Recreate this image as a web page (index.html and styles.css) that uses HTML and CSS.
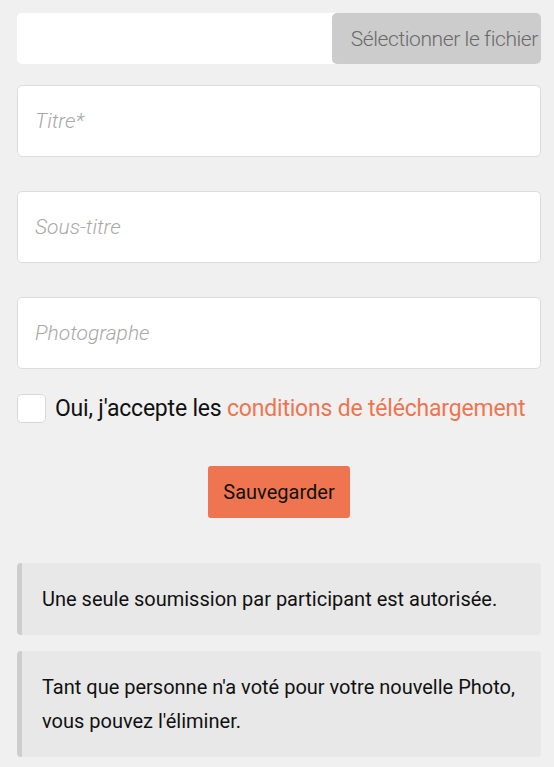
FILE: index.html
```html
<!DOCTYPE html>
<html lang="fr">
<head>
<meta charset="utf-8">
<link rel="stylesheet" href="styles.css">
</head>
<body>
<form class="form">
  <div class="file">
    <span class="file-name"></span>
    <span class="file-btn">Sélectionner le fichier</span>
  </div>
  <input class="field" type="text" placeholder="Titre*">
  <input class="field" type="text" placeholder="Sous-titre">
  <input class="field" type="text" placeholder="Photographe">
  <label class="check">
    <span class="box"></span>
    <span class="check-text">Oui, j'accepte les <a class="link">conditions de téléchargement</a></span>
  </label>
  <div class="actions"><button type="button" class="save">Sauvegarder</button></div>
  <div class="notice">Une seule soumission par participant est autorisée.</div>
  <div class="notice">Tant que personne n'a voté pour votre nouvelle Photo, vous pouvez l'éliminer.</div>
</form>
</body>
</html>
```
FILE: styles.css
```css
html, body { margin: 0; padding: 0; }
body {
  background: #f0f0f0;
  font-family: Roboto, "Liberation Sans", sans-serif;
  color: #111;
}
.form {
  width: 524px;
  margin: 13px 0 0 17px;
  display: flex;
  flex-direction: column;
}
.file {
  display: flex;
  height: 51px;
  background: #fff;
  border-radius: 5px;
}
.file-name { flex: 1; }
.file-btn {
  width: 209px;
  background: #cccccc;
  border-radius: 5px;
  color: #6a6a6a;
  font-size: 21px;
  font-weight: 300;
  letter-spacing: -0.4px;
  display: flex;
  align-items: center;
  justify-content: flex-end;
  padding-right: 3px;
  box-sizing: border-box;
  white-space: nowrap;
}
.field {
  height: 72px;
  margin-top: 21px;
  margin-bottom: 13px;
  border: 1px solid #dcdcdc;
  border-radius: 5px;
  background: #fff;
  box-sizing: border-box;
  padding: 0 17px;
  font-family: inherit;
  font-size: 21px;
  outline: none;
}
.field::placeholder {
  color: #a8a8a8;
  font-style: italic;
  font-weight: 300;
}
.check {
  display: flex;
  align-items: center;
  gap: 9px;
  margin-top: 12px;
}
.box {
  width: 27px;
  height: 27px;
  border: 1px solid #d8d8d8;
  border-radius: 5px;
  background: #fff;
}
.check-text {
  font-size: 23px;
  letter-spacing: -0.2px;
}
.link { color: #ee7550; }
.actions {
  display: flex;
  justify-content: center;
  margin-top: 43px;
}
.save {
  width: 142px;
  height: 52px;
  background: #ee7550;
  border: 0;
  border-radius: 3px;
  font-family: inherit;
  font-size: 20px;
  color: #111;
}
.notice {
  margin-top: 45px;
  background: #e8e8e8;
  border-left: 5px solid #cdcdcd;
  border-radius: 4px;
  padding: 19px 20px;
  font-size: 20px;
  line-height: 34px;
}
.notice + .notice { margin-top: 16px; }
```
